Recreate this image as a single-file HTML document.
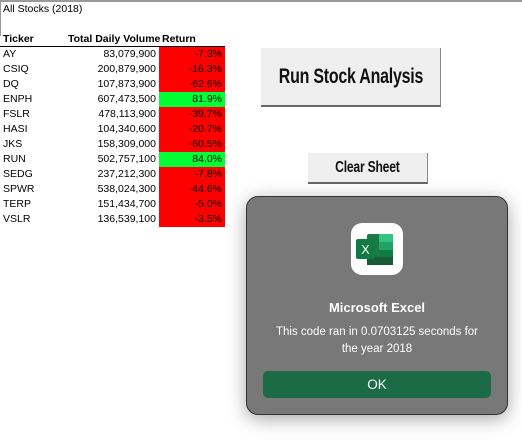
<!DOCTYPE html>
<html><head><style>
body{margin:0;width:522px;height:440px;background:#fff;position:relative;overflow:hidden;font-family:"Liberation Sans",sans-serif;}
.t{position:absolute;font-size:10.5px;color:#000;white-space:nowrap;}
.r{text-align:right;}
.btn{position:absolute;background:#efefef;border-right:1px solid #888;border-bottom:2px solid #666;display:flex;align-items:center;justify-content:center;font-weight:bold;color:#111;}
.btn span{display:inline-block;white-space:nowrap;transform:scaleX(0.76);letter-spacing:-0.3px}
</style></head><body>
<div style="position:absolute;left:0;top:0;width:522px;height:2px;background:#9a9a9a"></div>
<div style="position:absolute;left:0;top:0;width:1px;height:36px;background:#999"></div>
<div class="t" style="left:3px;top:3px">All Stocks (2018)</div>
<div class="t" style="left:3px;top:33px;font-weight:bold">Ticker</div>
<div class="t" style="left:68px;top:33px;font-weight:bold">Total Daily Volume</div>
<div class="t" style="left:162px;top:33px;font-weight:bold">Return</div>
<div style="position:absolute;left:0;top:46px;width:225px;height:1px;background:#000"></div>
<div id="rows"></div>
<script>
var d=[["AY","83,079,900","-7.3%",0],["CSIQ","200,879,900","-16.3%",0],["DQ","107,873,900","-62.6%",0],["ENPH","607,473,500","81.9%",1],["FSLR","478,113,900","-39.7%",0],["HASI","104,340,600","-20.7%",0],["JKS","158,309,000","-60.5%",0],["RUN","502,757,100","84.0%",1],["SEDG","237,212,300","-7.8%",0],["SPWR","538,024,300","-44.6%",0],["TERP","151,434,700","-5.0%",0],["VSLR","136,539,100","-3.5%",0]];
var h="";d.forEach(function(r,i){var y=47+i*15;
h+='<div style="position:absolute;left:159px;top:'+y+'px;width:66px;height:15px;background:'+(r[3]?'#00ff33':'#ff0000')+'"></div>';
h+='<div class="t" style="left:3px;top:'+(y+1)+'px">'+r[0]+'</div>';
h+='<div class="t r" style="left:60px;width:96px;top:'+(y+1)+'px">'+r[1]+'</div>';
h+='<div class="t r" style="left:159px;width:63px;top:'+(y+1)+'px">'+r[2]+'</div>';});
document.getElementById("rows").innerHTML=h;
</script>
<div class="btn" style="left:261px;top:48px;width:179px;height:57px;font-size:21px"><span>Run Stock Analysis</span></div>
<div class="btn" style="left:308px;top:153px;width:119px;height:29px;font-size:16px"><span>Clear Sheet</span></div>
<div style="position:absolute;left:246px;top:196px;width:262px;height:219px;background:#787878;border:1px solid #333;border-radius:12px;box-shadow:0 4px 18px rgba(0,0,0,.35);box-sizing:border-box"></div>
<div style="position:absolute;left:351px;top:223px;width:52px;height:52px;background:#fff;border-radius:11px"></div>
<svg style="position:absolute;left:351px;top:223px" width="52" height="52" viewBox="0 0 52 52">
<rect x="16" y="11" width="26" height="31" rx="2" fill="#1d7a45"/>
<rect x="28" y="11" width="14" height="8" fill="#33c481"/>
<rect x="28" y="19" width="14" height="8" fill="#21a366"/>
<rect x="28" y="27" width="14" height="8" fill="#107c41"/>
<rect x="16" y="34" width="26" height="8" fill="#185c37"/>
<rect x="5" y="16" width="19" height="20" rx="2" fill="#107c41"/>
<text x="14.5" y="31" font-size="13" fill="#fff" text-anchor="middle" font-family="Liberation Sans">X</text>
</svg>
<div class="t" style="left:246px;width:262px;text-align:center;top:300px;color:#fff;font-weight:bold;font-size:13px">Microsoft Excel</div>
<div class="t" style="left:246px;width:262px;text-align:center;top:324px;color:#fff;font-size:11.5px;line-height:17px;white-space:normal">This code ran in 0.0703125 seconds for<br>the year 2018</div>
<div style="position:absolute;left:263px;top:371px;width:228px;height:27px;background:#1a6b46;border-radius:5px;color:#fff;font-size:13.5px;display:flex;align-items:center;justify-content:center">OK</div>
</body></html>
